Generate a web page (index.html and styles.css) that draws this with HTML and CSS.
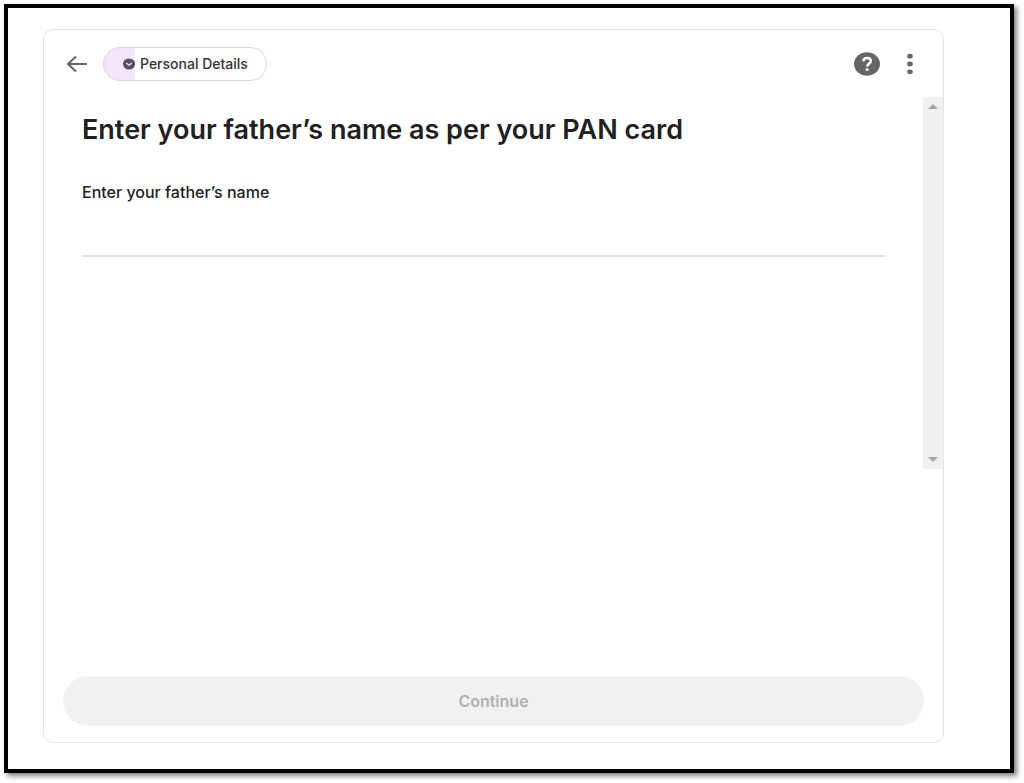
FILE: index.html
```html
<!DOCTYPE html>
<html lang="en">
<head>
    <meta charset="UTF-8">
    <meta name="viewport" content="width=device-width, initial-scale=1.0">
    <title>Personal Details</title>

    <link rel="stylesheet" href="styles.css">

</head>
<body>
<div class="frame">
    <form class="card">

        <div class="card-header">
            <button type="button" class="icon-btn back-btn" aria-label="Back">
                <svg width="22" height="18" viewBox="0 0 22 18" fill="none" stroke="#666" stroke-width="2">
                    <path d="M21 9H2M10 1.5L2 9l8 7.5"/>
                </svg>
            </button>
            <button type="button" class="step-pill">
                <svg width="12" height="12" viewBox="0 0 12 12">
                    <ellipse cx="6" cy="6" rx="6" ry="5.5" fill="#5b4a60"/>
                    <path d="M3.2 5l2.8 2.2L8.8 5" fill="none" stroke="#f3e8fb" stroke-width="1.3"/>
                </svg>
                Personal Details
            </button>
            <button type="button" class="icon-btn help-btn" aria-label="Help">
                <svg width="26" height="24" viewBox="0 0 26 24">
                    <ellipse cx="13" cy="12" rx="13" ry="11.7" fill="#666"/>
                    <path d="M9.4 9.3C9.4 7 11 5.9 13.1 5.9s3.7 1.2 3.7 3.1c0 2.5-3.5 2.6-3.5 5.6" fill="none" stroke="#fff" stroke-width="2.5"/>
                    <ellipse cx="13.2" cy="17.6" rx="1.6" ry="1.3" fill="#fff"/>
                </svg>
            </button>
            <button type="button" class="icon-btn" aria-label="More options">
                <svg width="6" height="22" viewBox="0 0 6 22" fill="#666">
                    <ellipse cx="3" cy="3.2" rx="2.8" ry="2.4"/>
                    <ellipse cx="3" cy="11" rx="2.8" ry="2.4"/>
                    <ellipse cx="3" cy="18.8" rx="2.8" ry="2.4"/>
                </svg>
            </button>
        </div>

        <div class="card-body">
            <div class="fields">
                <h1>Enter your father’s name as per your PAN card</h1>
                <label for="fatherName">Enter your father’s name</label>
                <input type="text" class="form-control" id="fatherName" name="fatherName">
            </div>
            <div class="scroll-track">
                <svg width="10" height="5" viewBox="0 0 10 5" fill="#a3a3a3"><path d="M0 5L5 0l5 5z"/></svg>
                <svg width="10" height="5" viewBox="0 0 10 5" fill="#a3a3a3"><path d="M0 0h10L5 5z"/></svg>
            </div>
        </div>

        <div class="card-footer">
            <button type="submit" class="btn-continue" disabled>Continue</button>
        </div>

    </form>
</div>
</body>
</html>
```
FILE: styles.css
```css
* {
    box-sizing: border-box;
}

body {
    margin: 0;
    padding: 4px 10px 10px 4px;
    min-height: 100vh;
    display: flex;
    background-color: #fff;
    font-family: Inter, "Liberation Sans", sans-serif;
    color: #212121;
}

button {
    font-family: inherit;
    cursor: pointer;
}

.frame {
    flex: 1;
    display: flex;
    padding: 21px 66px 26px 35px;
    border: 4px solid #000;
    box-shadow: 3px 3px 5px rgba(0, 0, 0, 0.5);
}

.card {
    flex: 1;
    display: flex;
    flex-direction: column;
    border: 1px solid #e3e3e3;
    border-radius: 10px;
}

.card-header {
    display: flex;
    align-items: center;
    height: 67px;
    padding: 0 30px 0 22px;
}

.icon-btn {
    display: flex;
    padding: 0;
    border: none;
    background: none;
}

.back-btn {
    margin-right: 15px;
}

/* Light purple part shows the progress of the step */
.step-pill {
    display: flex;
    align-items: center;
    gap: 5px;
    height: 34px;
    padding: 0 18px 0 19px;
    border: 1px solid #d9d4dc;
    border-radius: 17px;
    background: linear-gradient(to right, #f3e8fb 19%, #fff 19%);
    color: #333;
    font-size: 14px;
    font-weight: 500;
}

.help-btn {
    margin-left: auto;
    margin-right: 27px;
}

.card-body {
    display: flex;
    height: 372px;
}

.fields {
    flex: 1;
    padding: 16px 38px 0;
}

h1 {
    margin: 0 0 34px;
    font-size: 27px;
    line-height: 34px;
    font-weight: 600;
}

label {
    display: block;
    font-size: 16px;
    line-height: 22px;
    font-weight: 500;
}

.form-control {
    display: block;
    width: 100%;
    height: 54px;
    padding: 10px 0;
    border: none;
    border-bottom: 2px solid #e1e1e1;
    background: none;
    font-family: inherit;
    font-size: 16px;
    outline: none;
}

.scroll-track {
    display: flex;
    flex-direction: column;
    justify-content: space-between;
    align-items: center;
    width: 20px;
    padding: 7px 0;
    background-color: #f0f0f0;
}

.card-footer {
    margin-top: auto;
    padding: 0 19px 16px;
}

.btn-continue {
    width: 100%;
    height: 50px;
    border: none;
    border-radius: 25px;
    background-color: #f1f1f1;
    color: #b0b0b0;
    font-size: 16px;
    font-weight: 600;
    cursor: default;
}
```
